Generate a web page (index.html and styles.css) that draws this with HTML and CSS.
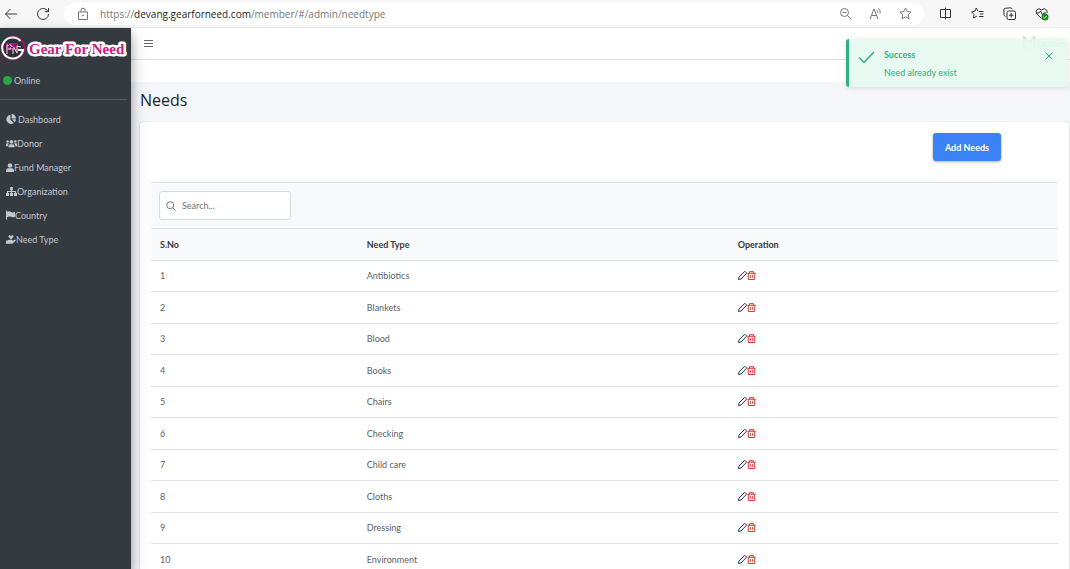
FILE: index.html
```html
<!DOCTYPE html>
<html lang="en">
<head>
<meta charset="utf-8">
<meta name="viewport" content="width=device-width, initial-scale=1">
<title>Needs</title>
<link rel="stylesheet" href="styles.css">
</head>
<body>
<svg class="defs" aria-hidden="true">
  <symbol id="pencil" viewBox="0 0 14 14"><path d="M.8 13.200l.7-3.800L9.800 1.100q1-.8 2 .2l.7.7q1 1 .2 2L4.700 12.500z" fill="none" stroke="currentColor" stroke-width="1.500"/></symbol>
  <symbol id="trash" viewBox="0 0 14 14"><path d="M.5 3.500h13M4 3.500V1h6v2.500M2 3.500v9.700h10V3.500M5.300 6.500v4M8.700 6.500v4" fill="none" stroke="currentColor" stroke-width="1.500"/></symbol>
</svg>
<header class="browser">
  <button class="tool" aria-label="Back"><svg width="14" height="14" viewBox="0 0 14 14"><path d="M13 7H1.500M6.500 2l-5 5 5 5"/></svg></button>
  <button class="tool reload" aria-label="Reload"><svg width="14" height="14" viewBox="0 0 14 14"><path d="M12.500 7A5.500 5.500 0 1 1 11 3.200L12.300 4.500M12.500 1v3.700H8.800"/></svg></button>
  <div class="address">
    <svg class="grey" width="12" height="14" viewBox="0 0 12 14"><path d="M1.500 5h9v7.500h-9zM4 5V3.200a2 2 0 0 1 4 0V5"/><circle cx="6" cy="8.500" r=".6"/></svg>
    <span class="url">https://<b>devang.gearforneed.com</b>/member/#/admin/needtype</span>
    <button class="tool grey" aria-label="Zoom out"><svg width="13" height="13" viewBox="0 0 13 13"><circle cx="5.500" cy="5.500" r="4"/><path d="M8.500 8.500L12 12M3.500 5.500h4"/></svg></button>
    <button class="tool grey" aria-label="Read aloud"><svg width="13" height="13" viewBox="0 0 13 13"><path d="M1 12l4-10 4 10M2.500 8.500h5M8 3.200q1 1 .6 2.500M9.500 1.500q2.500 2 1.500 5"/></svg></button>
    <button class="tool grey" aria-label="Favourite"><svg width="13" height="13" viewBox="0 0 13 13"><path d="M6.500 1l1.700 3.600 3.900.5-2.900 2.700.8 3.900-3.500-1.900L3 11.700l.8-3.900L.9 5.100l3.900-.5z"/></svg></button>
  </div>
  <div class="extras">
    <button class="tool" aria-label="Split screen"><svg width="13" height="13" viewBox="0 0 13 13"><path d="M6.500 2.500H1.500v8h5M6.500 2.500h5v8h-5M6.500.5v12"/></svg></button>
    <button class="tool" aria-label="Favourites"><svg width="13" height="13" viewBox="0 0 13 13"><path d="M8 4.500H12.500M9 7h3.500M8 9.500h4.500M7 4.300L5.300 1 3.800 4.300.6 4.900 3 7.300 2.500 11l3.300-1.800"/></svg></button>
    <button class="tool" aria-label="Collections"><svg width="13" height="13" viewBox="0 0 13 13"><rect x="4" y="4" width="8.500" height="8.500" rx="1.500"/><path d="M8.200 6v4.500M6 8.200h4.500M2.500 9.500Q1 9 1 7.500L.8 3q0-1.500 1.500-1.700L7.500.8q1.500 0 1.700 1.500"/></svg></button>
    <button class="tool" aria-label="Browser essentials"><svg width="14" height="14" viewBox="0 0 14 14"><path d="M6.500 11.500L2 7Q.3 5 1.500 3q2.300-2.700 5 0 2.700-2.700 5 0Q12.500 4.500 12 6M1 6h3l1.500-2 2 4 1-2H11"/><circle class="ok" cx="10" cy="10" r="3.500"/><path class="tick" d="M8.400 10l1.200 1.200 2-2.200"/></svg></button>
  </div>
</header>
<div class="app">
  <nav class="sidebar">
    <a class="brand" href="#" aria-label="Gear For Need">
      <svg width="128" height="28" viewBox="0 0 128 28">
        <circle cx="13" cy="14" r="11.500" fill="#302f38" stroke="#a01868" stroke-width="1.500"/>
        <path d="M20.500 7A10.500 10.500 0 1 0 23 16h-5" fill="none" stroke="#fff" stroke-width="2"/>
        <path d="M6 9h12v7H6z" fill="#b0127f"/>
        <path d="M7 20v-9h4v4H8M13 20v-8l4 7v-7M17 12l4 1" fill="none" stroke="#f3d9eb" stroke-width="1"/>
        <path d="M8 10l4 4 5-4" fill="none" stroke="#4a1040" stroke-width="1"/>
        <text class="brand-text outline" x="29" y="20" aria-hidden="true">Gear For Need</text>
      </svg>
    </a>
    <div class="status"><span class="dot"></span>Online</div>
    <ul class="menu">
      <li><a class="spaced" href="#"><svg width="10" height="10" viewBox="0 0 16 16"><path d="M7 1v8l5.500 5.500A7.500 7.500 0 1 1 7 1zM9 0a7 7 0 0 1 7 7H9zM9.500 8.500H16a7 7 0 0 1-2 4.800z"/></svg>Dashboard</a></li>
      <li><a href="#"><svg width="11" height="9" viewBox="0 0 20 16"><circle cx="10" cy="5" r="3.500"/><circle cx="3" cy="4.500" r="2.200"/><circle cx="17" cy="4.500" r="2.200"/><path d="M4.500 15v-2q0-3.500 3.500-3.500h4q3.500 0 3.500 3.500v2zM0 13V9.500Q0 7.500 2 7.500h2q1 0 1.500.7Q3.300 9.500 3 13zM20 13V9.500q0-2-2-2h-2q-1 0-1.500.7 2.200 1.300 2.500 4.800z"/></svg>Donor</a></li>
      <li><a href="#"><svg width="8" height="9" viewBox="0 0 14 16"><circle cx="7" cy="4.500" r="4"/><path d="M0 16v-2.500Q0 9.500 4 9.500h6q4 0 4 4V16z"/></svg>Fund Manager</a></li>
      <li><a href="#"><svg width="11" height="9" viewBox="0 0 20 16"><path d="M7.500 0h5v5.500h-5zM0 10.500h5.500V16H0zM7.200 10.500h5.600V16H7.200zM14.500 10.500H20V16h-5.500zM9 5.500h2v5H9zM1.700 7h16.600v3.500h-2V9H3.700v1.500h-2z"/></svg>Organization</a></li>
      <li><a href="#"><svg width="9" height="10" viewBox="0 0 16 16"><path d="M0 0h2v16H0zM2 2.500q4-2 7 0t7-.5v9q-4 2-7 .2T2 12z"/></svg>Country</a></li>
      <li><a href="#"><svg width="10" height="9" viewBox="0 0 18 16"><path d="M9 8L5 4Q3.500 2 5.500.5 7.500-.3 9 1.700q1.500-2 3.500-1.200Q14.500 2 13 4zM0 10h3q2-2 4-1.500h4q1.500.5 1 2H8h4l4-2.500q2 0 2 1.500L13 14.500l-2 1H0z"/></svg>Need Type</a></li>
    </ul>
  </nav>
  <div class="page">
    <div class="topbar">
      <button class="burger" aria-label="Toggle menu"><svg width="9" height="8" viewBox="0 0 9 8"><path d="M0 .5h9M0 3.500h9M0 6.500h9"/></svg></button>
      <a class="user" href="#"><svg width="14" height="16" viewBox="0 0 14 16"><path d="M2 1l3 4h4l3-4v10l-5 4-5-4z"/></svg>-admin</a>
    </div>
    <div class="crumbs"></div>
    <main class="content">
      <h1>Needs</h1>
      <section class="card">
        <div class="actions"><button class="add">Add Needs</button></div>
        <div class="filter">
          <label class="search" aria-label="Search">
            <svg width="10" height="10" viewBox="0 0 10 10"><circle cx="4.200" cy="4.200" r="3.500"/><path d="M6.800 6.800L9.500 9.500"/></svg>
            <input type="text" placeholder="Search...">
          </label>
        </div>
        <table>
          <thead><tr><th class="no">S.No</th><th class="type">Need Type</th><th>Operation</th></tr></thead>
          <tbody id="rows"></tbody>
        </table>
      </section>
    </main>
  </div>
</div>
<div class="toast" role="alert">
  <svg class="check" width="17" height="13" viewBox="0 0 17 13"><path d="M1 6.500L6 11.500 16 1"/></svg>
  <div class="message"><strong>Success</strong><span>Need already exist</span></div>
  <button class="close" aria-label="Close"><svg width="8" height="8" viewBox="0 0 8 8"><path d="M.7.7l6.600 6.600M7.300.7L.7 7.300"/></svg></button>
</div>
<script src="app.js"></script>
</body>
</html>
```
FILE: styles.css
```css
* { box-sizing: border-box; }
body {
  margin: 0;
  height: 100vh;
  display: flex;
  flex-direction: column;
  overflow: hidden;
  font-family: Lato, "Open Sans", sans-serif;
  font-size: 9px;
  color: #5a6168;
  background: #f4f6f9;
}
button { border: 0; padding: 0; background: none; font: inherit; color: inherit; cursor: pointer; }
a { color: inherit; text-decoration: none; }
svg { display: block; flex: none; }
.defs { position: absolute; width: 0; height: 0; }

.browser {
  flex: none;
  height: 28px;
  display: flex;
  align-items: center;
  padding-left: 4px;
  background: #f7f7f7;
  border-bottom: 1px solid #ebebeb;
}
.browser svg { fill: none; stroke: #333; stroke-width: 1; }
.browser .grey, .browser .grey svg { stroke: #777; }
.reload { margin: 0 14px 0 18px; }
.address {
  flex: 1;
  height: 22px;
  display: flex;
  align-items: center;
  gap: 17px;
  padding: 0 12px 0 13px;
  border-radius: 11px;
  background: #fff;
}
.url { flex: 1; margin-left: -6px; font-family: "Open Sans", sans-serif; font-size: 10px; color: #767676; }
.url b { font-weight: 400; color: #222; }
.extras { display: flex; gap: 19px; padding: 0 21px 0 15px; }
.browser .ok { fill: #188a1c; stroke: none; }
.browser .tick { stroke: #fff; }

.app { flex: 1; min-height: 0; display: flex; }
.sidebar {
  z-index: 1;
  flex: none;
  width: 131px;
  background: #343a40;
  color: #c2c7d0;
  box-shadow: 0 8px 16px rgba(0, 0, 0, .25), 0 4px 8px rgba(0, 0, 0, .2);
}
.brand { display: block; padding-top: 6px; }
.brand-text {
  font: bold 15px "Liberation Serif", serif;
  fill: #c8207f;
  stroke: #fff;
  stroke-width: 5px;
  stroke-linejoin: round;
  paint-order: stroke;
}
.status {
  display: flex;
  align-items: center;
  gap: 2px;
  height: 38px;
  margin: 0 4px 0 0;
  padding-left: 3px;
  border-bottom: 1px solid #4f5962;
}
.dot { width: 9px; height: 9px; border-radius: 50%; background: #28a745; }
.menu { list-style: none; margin: 7px 0 0; padding: 0 0 0 6px; }
.menu a { display: flex; align-items: center; height: 24px; }
.menu svg { fill: currentColor; }
.spaced { gap: 2px; }

.page { flex: 1; min-width: 0; display: flex; flex-direction: column; }
.topbar {
  flex: none;
  height: 32px;
  display: flex;
  align-items: center;
  justify-content: space-between;
  padding: 0 5px 0 13px;
  background: #fff;
  border-bottom: 1px solid #dee2e6;
}
.burger svg { stroke: #666; stroke-width: 1; }
.user { display: flex; align-items: center; gap: 2px; color: #aab; }
.user svg { fill: none; stroke: #dde3e6; stroke-width: 2; }
.crumbs { flex: none; height: 22px; background: #fff; }
.content { flex: 1; min-height: 0; display: flex; flex-direction: column; padding-left: 9px; }
h1 {
  flex: none;
  margin: 0;
  height: 40px;
  font: 500 16px/36px "Open Sans", sans-serif;
  color: #212529;
}
.card {
  flex: 1;
  margin-right: 1px;
  padding: 0 11px;
  background: #fff;
  border-radius: 3px 3px 0 0;
  box-shadow: 0 0 1px rgba(0, 0, 0, .2), 0 1px 2px rgba(0, 0, 0, .2);
}
.actions { height: 60px; padding: 11px 57px 0 0; text-align: right; }
.add {
  height: 28px;
  padding: 0 12px;
  border-radius: 3px;
  background: #3b82f6;
  color: #fff;
  font-weight: 700;
  box-shadow: 0 1px 3px rgba(0, 0, 0, .3);
}
.filter { padding: 8px; background: #f8f9fa; border-top: 1px solid #dee2e6; border-bottom: 1px solid #dee2e6; }
.search {
  display: flex;
  align-items: center;
  gap: 6px;
  width: 132px;
  height: 29px;
  padding: 0 6px;
  border: 1px solid #d5dade;
  border-radius: 3px;
  background: #fff;
}
.search svg { fill: none; stroke: #6c757d; }
.search input { flex: 1; min-width: 0; border: 0; padding: 0; font: inherit; outline: 0; background: none; }
.search input::placeholder { color: #6c757d; }
table { width: 100%; table-layout: fixed; border-collapse: collapse; }
th, td { padding: 0 9px; text-align: left; border-bottom: 1px solid #dee2e6; }
th { height: 31px; background: #f8f9fa; color: #343a40; font-weight: 700; }
td { height: 31px; }
tr:nth-child(even) td { height: 32px; }
.no { width: 22.8%; }
.type { width: 40.9%; }
.ops { display: flex; }
.ops button { color: #2b2960; }
.ops .delete { color: #d9302c; }

.toast {
  position: absolute;
  z-index: 2;
  top: 39px;
  right: 2px;
  width: 222px;
  height: 48px;
  display: flex;
  align-items: flex-start;
  gap: 9px;
  padding: 9px 15px 0 9px;
  border-left: 3px solid #2fae80;
  border-radius: 3px;
  background: rgba(228, 248, 240, .9);
  color: #2fae80;
  box-shadow: 0 1px 5px rgba(0, 0, 0, .12);
}
.toast svg { fill: none; stroke: currentColor; stroke-width: 1; }
.toast .check { margin-top: 3px; stroke-width: 1.5; }
.message { flex: 1; display: flex; flex-direction: column; gap: 4px; line-height: 14px; }
.close { margin-top: 4px; }
```
FILE: app.js
```js
const needs = ["Antibiotics", "Blankets", "Blood", "Books", "Chairs", "Checking", "Child care", "Cloths", "Dressing", "Environment"];
document.getElementById("rows").innerHTML = needs.map((name, i) => `
  <tr><td>${i + 1}</td><td>${name}</td><td><div class="ops">
    <button aria-label="Edit ${name}"><svg width="9" height="9"><use href="#pencil"/></svg></button>
    <button class="delete" aria-label="Delete ${name}"><svg width="9" height="9"><use href="#trash"/></svg></button>
  </div></td></tr>`).join("");
```
